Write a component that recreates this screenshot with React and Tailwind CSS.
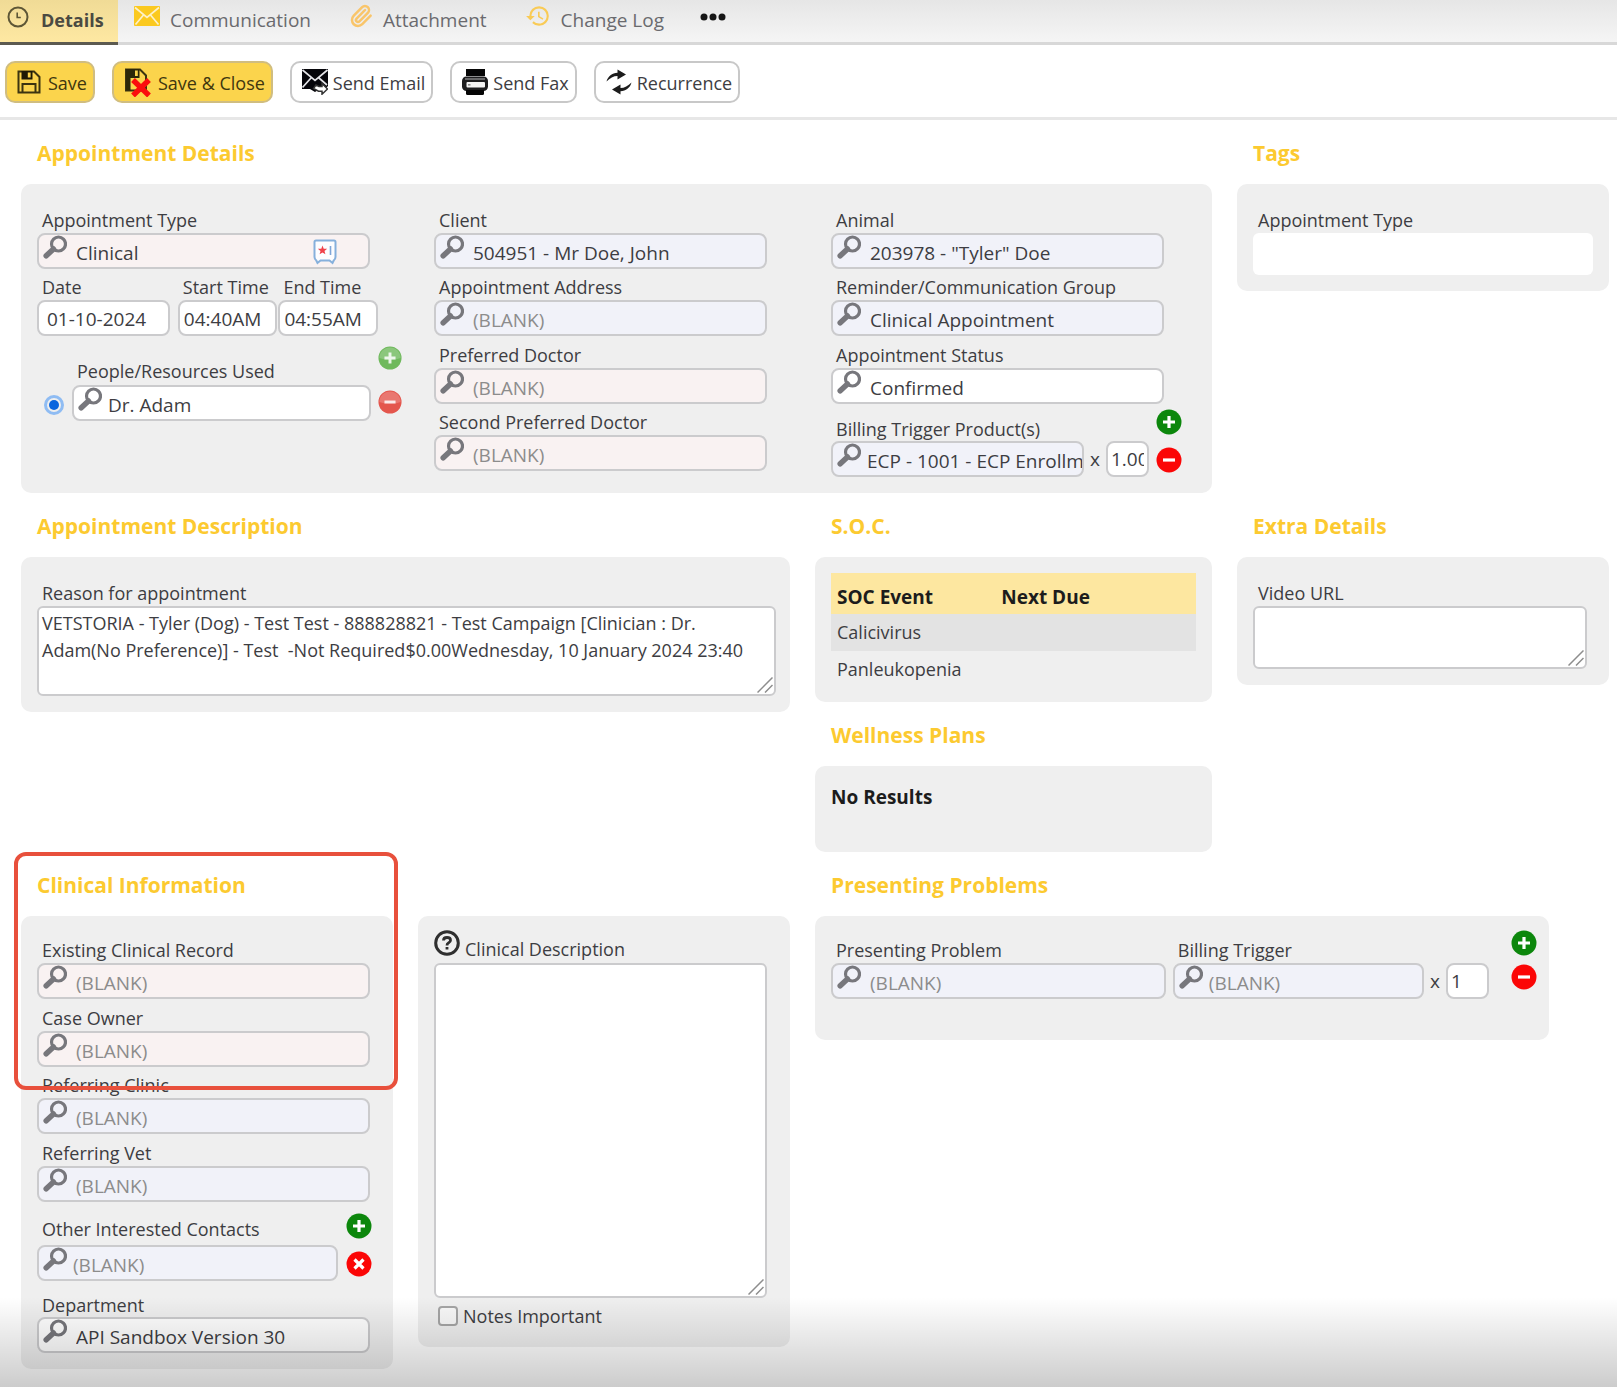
import { useId } from 'react';
import { MdHistory } from 'react-icons/md';
import { Paperclip } from 'lucide-react';

const TONES = {
  pink: 'bg-[#f9f2f2]',
  blue: 'bg-[#f1f2f9]',
  white: 'bg-white',
};

/* ---------- Icons ---------- */

const MagnifierIcon = () => (
  <svg viewBox="0 0 24 24" className="h-6 w-6 shrink-0" fill="none" stroke="#77777c">
    <circle cx="15.5" cy="9" r="7" strokeWidth="3.2" />
    <path d="M10.5 14 3.2 20.8" strokeWidth="5.5" strokeLinecap="round" />
  </svg>
);

const ClockIcon = () => (
  <svg viewBox="0 0 22 22" className="h-[22px] w-[22px]" fill="none" stroke="#5d5636">
    <circle cx="11" cy="11" r="9.5" strokeWidth="2" />
    <path d="M10.2 6.5v5h3.6" strokeWidth="1.6" />
  </svg>
);

const MailIcon = () => (
  <svg viewBox="0 0 26 20" className="h-5 w-[26px]">
    <rect width="26" height="20" rx="1" fill="#fbc91f" />
    <path d="M1 1.5 13 11.5 25 1.5M1.5 18.5 9.5 9M24.5 18.5 16.5 9" fill="none" stroke="#fdf1c8" strokeWidth="1.7" />
  </svg>
);

const FloppyIcon = () => (
  <svg viewBox="0 0 24 24" className="h-6 w-6">
    <path d="M1.5 1.5h15.5l5.5 5.5v15.5h-21z" fill="none" stroke="#3c3410" strokeWidth="2" />
    <path d="M4.5 1h11v8.5h-11z" fill="#1d1905" />
    <path d="M10.8 2.5h2.8v5h-2.8z" fill="#fbd44c" />
    <path d="M5.5 22.5v-8.5h13v8.5" fill="none" stroke="#3c3410" strokeWidth="2" />
  </svg>
);

const FloppyCloseIcon = () => (
  <svg viewBox="0 0 27 30" className="h-[30px] w-[27px]">
    <path d="M2 2.5h14l6 6v15h-20z" fill="none" stroke="#3c3410" strokeWidth="2" />
    <path d="M2 2h13.5v9h-9v12.5h-4.500z" fill="#2c2708" />
    <path d="M11 3.5h2.8v5.5h-2.8z" fill="#fbd44c" />
    <path d="M9 13 25 28.5M25 13 9 28.5" stroke="#fb0d0d" strokeWidth="5.4" />
  </svg>
);

const SendMailIcon = () => (
  <svg viewBox="0 0 26 26" className="h-[26px] w-[26px]">
    <path d="M0 0h26v17l-4 4h-6l-3 2-5-3H0z" fill="#05050a" />
    <path d="M.5 1 13 11.500 25.500 1M.5 18.500 9 9M25 16 17 9" fill="none" stroke="#e4e4e8" strokeWidth="1.7" />
    <path d="M11.5 19.5 14 16l3 1.5h3v-3l5.5 5.500-5.500 5.200v-3h-3.500z" fill="#fff" stroke="#333" strokeWidth="1.5" />
  </svg>
);

const FaxIcon = () => (
  <svg viewBox="0 0 26 26" className="h-[26px] w-[26px]">
    <path d="M4 0h19v7h-19z" fill="#050505" />
    <rect y="7.5" width="26" height="14.5" rx="4.5" fill="#1d1d1f" />
    <path d="M3 10h20" stroke="#8a8a8a" strokeWidth="1.4" />
    <rect x="4.5" y="13" width="18.5" height="5.5" rx="1" fill="#f4f4f4" />
    <path d="M4 21h18v3.5q0 1.5-1.5 1.5h-15q-1.5 0-1.5-1.5z" fill="#050505" />
    <path d="M6 15.8h2.5" stroke="#888" strokeWidth="1.5" />
  </svg>
);

const RecurrenceIcon = () => (
  <svg viewBox="0 0 26 26" className="h-[26px] w-[26px]" fill="#1c1c1c">
    <path d="M.5 12.500C2 7 6 4 11.500 3.700V.500L20 5.500l-8.500 5V7C7.500 7 4 9 .5 12.500z" />
    <path d="M25.500 13.500c-1.500 5.500-5.500 8.500-11 8.800v3.200L6 20.500l8.500-5V19c4 0 7.500-2 11-5.500z" />
  </svg>
);

const BadgeIcon = () => (
  <svg viewBox="0 0 24 26" className="mt-1 mr-[31px] h-[26px] w-6 shrink-0">
    <path d="M3 1.500h18q1.500 0 1.500 1.500v15q0 2-1.800 3.500l-1.200 2.500-3-2.500h-9l-3 2.500-1.200-2.500Q1.500 20 1.500 18V3q0-1.500 1.500-1.500z" fill="#fdfdff" stroke="#86b0dc" strokeWidth="2" />
    <path d="m9.500 6.500 1.200 3.200 3.500.1-2.700 2.100.9 3.400-2.900-1.900-2.900 1.900.9-3.400-2.700-2.100 3.500-.1z" fill="#f0434b" />
    <path d="M17.500 7v9" stroke="#7fa6d8" strokeWidth="1.6" />
  </svg>
);

const HelpIcon = () => (
  <svg viewBox="0 0 26 26" className="h-[26px] w-[26px]" fill="none" stroke="#2f2f2f">
    <circle cx="13" cy="13" r="11.3" strokeWidth="3" />
    <path d="M9.500 10.500Q9.500 7.500 13 7.500t3.500 2.700q0 1.600-1.800 2.500T13 15.500" strokeWidth="2.8" />
    <path d="M13 17v2.500" strokeWidth="2.8" />
  </svg>
);

const MARKS = {
  plus: 'M13 7v12M7 13h12',
  minus: 'M7 13h12',
  cross: 'M8.5 8.5l9 9M17.5 8.5l-9 9',
};

const RoundButton = ({ mark, fill, label, soft }) => (
  <button type="button" aria-label={label} className="shrink-0">
    <svg viewBox="0 0 26 26" className={soft ? 'h-6 w-6' : 'h-[26px] w-[26px]'}>
      <circle cx="13" cy="13" r="12.5" fill={fill} />
      {soft && <path d="M1.500 13a11.500 11.500 0 0 1 23 0q-11 4-23 0z" fill="#fff" opacity=".2" />}
      <path d={MARKS[mark]} stroke="#fff" strokeWidth="3.2" opacity={soft ? 0.85 : 1} />
    </svg>
  </button>
);

/* ---------- Form parts ---------- */

const Label = ({ htmlFor, className = 'pt-1.5 pb-px', children }) => (
  <label htmlFor={htmlFor} className={`block pl-[5px] text-[18px] leading-6 whitespace-nowrap ${className}`}>
    {children}
  </label>
);

const Lookup = ({ id, value, tone = 'blue', badge, tight }) => (
  <div className={`flex h-9 items-start overflow-hidden rounded-lg border-2 border-[#cbcbcd] pl-1 ${TONES[tone]}`}>
    <MagnifierIcon />
    <input
      id={id}
      defaultValue={value}
      placeholder="(BLANK)"
      className={`h-8 w-full min-w-0 flex-1 pt-[3px] outline-none placeholder:text-[#8c8c8c] ${tight ? 'pl-1.5' : 'pl-[9px]'}`}
    />
    {badge && <BadgeIcon />}
  </div>
);

const Field = ({ label, labelClass, ...rest }) => {
  const id = useId();
  return (
    <div>
      <Label htmlFor={id} className={labelClass}>{label}</Label>
      <Lookup id={id} {...rest} />
    </div>
  );
};

const PlainField = ({ label, value, className, inputClass = 'pl-1' }) => {
  const id = useId();
  return (
    <div className={className}>
      <Label htmlFor={id}>{label}</Label>
      <input
        id={id}
        defaultValue={value}
        className={`h-9 w-full rounded-lg border-2 border-[#cbcbcd] bg-white pt-px outline-none ${inputClass}`}
      />
    </div>
  );
};

const Quantity = ({ value, label }) => (
  <div className="flex shrink-0 items-center">
    <span className="w-[22px] text-center">x</span>
    <input
      aria-label={label}
      defaultValue={value}
      className="h-9 w-[43px] rounded-lg border-2 border-[#cbcbcd] bg-white px-[3px] outline-none"
    />
  </div>
);

const TextBox = ({ id, value, className }) => (
  <div className="relative">
    <textarea
      id={id}
      defaultValue={value}
      className={`block w-full resize-none rounded-md border-2 border-[#cbcbcd] bg-white px-[3px] py-0.5 text-[18px] leading-[27px] outline-none ${className}`}
    />
    <svg viewBox="0 0 16 16" className="absolute right-[3px] bottom-[3px] h-4 w-4" stroke="#8d8d8d" strokeWidth="1.5">
      <path d="M.5 15.5l15-15M8 15.5l7.5-7.5" />
    </svg>
  </div>
);

const Section = ({ title, className = '', panelClass = '', children }) => (
  <section className={className}>
    <h2 className="h-16 pt-[19px] pl-4 text-[21px] leading-7 font-bold text-[#fcca30]">{title}</h2>
    <div className={`rounded-[10px] bg-[#efefef] px-4 ${panelClass}`}>{children}</div>
  </section>
);

/* ---------- Header ---------- */

const TABS = [
  { label: 'Communication', icon: <MailIcon />, pad: 'pl-4' },
  { label: 'Attachment', icon: <Paperclip className="h-6 w-6" stroke="#f9c56a" strokeWidth={2.5} />, pad: 'pl-[38px]' },
  { label: 'Change Log', icon: <MdHistory className="h-[26px] w-[26px]" color="#f9cb56" />, pad: 'pl-[38px]' },
];

const Tabs = () => (
  <nav className="flex h-[45px] border-b-[3px] border-[#d8d8d8] bg-linear-to-b from-[#e6e6e6] to-[#f5f5f5] text-[#6a6a6e]">
    <a href="#details" className="-mb-[3px] flex w-[118px] border-b-[3px] border-[#5c5a50] bg-linear-to-b from-[#f0db96] to-[#fee8a2] pt-1.5 pl-[7px] text-[18px] font-bold text-[#4b4a42]">
      <ClockIcon />
      <span className="pl-3 leading-7">Details</span>
    </a>
    {TABS.map((tab) => (
      <a key={tab.label} href="#tab" className={`flex items-start pt-1.5 ${tab.pad}`}>
        <span className="flex h-5 items-center">{tab.icon}</span>
        <span className="pl-2.5 leading-7">{tab.label}</span>
      </a>
    ))}
    <button type="button" aria-label="More" className="flex h-[34px] items-center pl-9">
      <svg viewBox="0 0 26 8" className="h-2 w-[26px]" fill="#161616">
        <circle cx="4" cy="4" r="3.5" />
        <circle cx="13" cy="4" r="3.5" />
        <circle cx="22" cy="4" r="3.5" />
      </svg>
    </button>
  </nav>
);

const ToolButton = ({ icon, primary, gap = 'gap-[5px]', children }) => (
  <button
    type="button"
    className={`flex h-[42px] items-center rounded-[10px] border-2 pr-1.5 pl-2.5 text-[18px] whitespace-nowrap ${gap} ${
      primary ? 'border-[#d0bd80] bg-[#fbd44c] text-[#40370f]' : 'border-[#c8c8c8] bg-white'
    }`}
  >
    {icon}
    <span className="pt-0.5">{children}</span>
  </button>
);

const Toolbar = () => (
  <div className="flex h-[75px] items-center gap-[17px] border-b-[3px] border-[#e7e7e7] px-[5px] pt-0.5">
    <ToolButton primary gap="gap-[7px]" icon={<FloppyIcon />}>Save</ToolButton>
    <ToolButton primary gap="gap-[7px]" icon={<FloppyCloseIcon />}>Save &amp; Close</ToolButton>
    <ToolButton icon={<SendMailIcon />}>Send Email</ToolButton>
    <ToolButton icon={<FaxIcon />}>Send Fax</ToolButton>
    <ToolButton icon={<RecurrenceIcon />}>Recurrence</ToolButton>
  </div>
);

/* ---------- Sections ---------- */

const AppointmentDetails = () => (
  <Section title="Appointment Details" className="col-span-3" panelClass="grid grid-cols-3 gap-16 pt-[18px] pr-12 pb-4">
    <div>
      <Field label="Appointment Type" value="Clinical" tone="pink" badge />
      <div className="-mr-2 flex">
        <PlainField label="Date" value="01-10-2024" className="flex-4" inputClass="pl-2" />
        <PlainField label="Start Time" value="04:40AM" className="ml-2 flex-3" />
        <PlainField label="End Time" value="04:55AM" className="ml-px flex-3" />
      </div>
      <div className="-mr-8 flex pt-2.5">
        <div className="flex w-[35px] shrink-0 items-end pb-1.5 pl-[7px]">
          <input
            type="radio"
            name="resource"
            defaultChecked
            aria-label="Dr. Adam"
            className="h-5 w-5 appearance-none rounded-full border-[3px] border-[#8fbcf3] bg-[#0b66de] bg-clip-content p-[2px]"
          />
        </div>
        <div className="flex-1">
          <Field label="People/Resources Used" labelClass="pt-[13px] pb-0.5" value="Dr. Adam" tone="white" tight />
        </div>
        <div className="flex flex-col gap-5 pl-[7px]">
          <RoundButton mark="plus" fill="#6fb95c" label="Add resource" soft />
          <RoundButton mark="minus" fill="#e4564d" label="Remove resource" soft />
        </div>
      </div>
    </div>
    <div>
      <Field label="Client" value="504951 - Mr Doe, John" />
      <Field label="Appointment Address" />
      <Field label="Preferred Doctor" labelClass="pt-[7px] pb-px" tone="pink" />
      <Field label="Second Preferred Doctor" tone="pink" />
    </div>
    <div>
      <Field label="Animal" value={'203978 - "Tyler" Doe'} />
      <Field label="Reminder/Communication Group" value="Clinical Appointment" />
      <Field label="Appointment Status" labelClass="pt-[7px] pb-px" value="Confirmed" tone="white" />
      <div className="-mr-[18px] flex items-end">
        <div className="min-w-0 flex-1">
          <Field label="Billing Trigger Product(s)" labelClass="pt-[13px]" value="ECP - 1001 - ECP Enrollment" tight />
        </div>
        <Quantity value="1.00" label="Billing quantity" />
        <div className="flex flex-col gap-3 pb-1 pl-[7px]">
          <RoundButton mark="plus" fill="#0c870c" label="Add product" />
          <RoundButton mark="minus" fill="#fb0606" label="Remove product" />
        </div>
      </div>
    </div>
  </Section>
);

const SocTable = () => (
  <table className="w-full text-left">
    <thead>
      <tr className="h-[41px] bg-[#fde7a0] text-[#1c1c1c]">
        <th className="w-[45%] pt-2 pl-1.5 font-bold">SOC Event</th>
        <th className="pt-2 pl-1.5 font-bold">Next Due</th>
      </tr>
    </thead>
    <tbody className="text-[18px]">
      {['Calicivirus', 'Panleukopenia'].map((name) => (
        <tr key={name} className="h-[37px] odd:bg-[#e3e3e3]">
          <td className="pl-1.5">{name}</td>
          <td />
        </tr>
      ))}
    </tbody>
  </table>
);

const ClinicalInformation = () => (
  <Section title="Clinical Information" className="relative" panelClass="pt-4 pr-[23px] pb-4">
    <Field label="Existing Clinical Record" tone="pink" />
    <Field label="Case Owner" labelClass="pt-[7px] pb-px" tone="pink" />
    <Field label="Referring Clinic" />
    <Field label="Referring Vet" labelClass="pt-[7px] pb-px" />
    <div className="-mr-0.5 flex items-end pt-[7px]">
      <div className="flex-1">
        <Field label="Other Interested Contacts" labelClass="pt-2 pb-1" tight />
      </div>
      <div className="flex flex-col gap-3 pb-1 pl-2">
        <RoundButton mark="plus" fill="#0c870c" label="Add contact" />
        <RoundButton mark="cross" fill="#fb0606" label="Remove contact" />
      </div>
    </div>
    <Field label="Department" labelClass="pt-3" value="API Sandbox Version 30" tone="white" />
    {/* highlight around the record and owner fields */}
    <div className="pointer-events-none absolute top-0 -right-[5px] -left-[7px] h-[238px] rounded-xl border-4 border-[#e8503c]" />
  </Section>
);

const ClinicalDescription = () => (
  <section className="mt-16 self-start rounded-[10px] bg-[#efefef] pt-3.5 pr-[23px] pb-[19px] pl-4">
    <div className="flex h-[33px] items-start">
      <HelpIcon />
      <Label htmlFor="clinical-description" className="pt-[7px]">Clinical Description</Label>
    </div>
    <TextBox id="clinical-description" className="h-[335px]" />
    <div className="flex items-center pt-1.5 pl-1">
      <input
        id="notes-important"
        type="checkbox"
        className="h-5 w-5 appearance-none rounded border-2 border-[#a5a5a5] bg-[#f8f8f8]"
      />
      <Label htmlFor="notes-important" className="">Notes Important</Label>
    </div>
  </section>
);

const PresentingProblems = () => (
  <Section title="Presenting Problems" className="col-span-2 mr-[60px]" panelClass="flex pt-4 pb-[41px]">
    <div className="flex-4">
      <Field label="Presenting Problem" />
    </div>
    <div className="ml-[7px] flex-3">
      <Field label="Billing Trigger" tight />
    </div>
    <div className="flex items-end">
      <Quantity value="1" label="Problem quantity" />
    </div>
    <div className="-mt-0.5 -mr-1 flex flex-col gap-2 pl-[22px]">
      <RoundButton mark="plus" fill="#0c870c" label="Add problem" />
      <RoundButton mark="minus" fill="#fb0606" label="Remove problem" />
    </div>
  </Section>
);

export default function App() {
  return (
    <div className="relative min-h-screen bg-white pb-[18px] font-['Open_Sans','Noto_Sans',sans-serif] text-[19px] text-[#3d3d42]">
      <Tabs />
      <Toolbar />
      <main className="grid grid-cols-[372fr_372fr_397fr_372fr] gap-x-[25px] pr-2 pl-[21px]">
        <AppointmentDetails />
        <Section title="Tags" panelClass="pt-[18px] pb-4">
          <Label htmlFor="tag-type">Appointment Type</Label>
          <input id="tag-type" className="block h-[42px] w-full rounded-md bg-white px-2 outline-none" />
        </Section>

        <Section title="Appointment Description" className="col-span-2" panelClass="pt-[18px] pr-3.5 pb-4">
          <Label htmlFor="reason">Reason for appointment</Label>
          <TextBox
            id="reason"
            className="h-[90px]"
            value="VETSTORIA - Tyler (Dog) - Test Test - 888828821 - Test Campaign [Clinician : Dr. Adam(No Preference)] - Test  -Not Required$0.00Wednesday, 10 January 2024 23:40"
          />
        </Section>
        <div>
          <Section title="S.O.C." panelClass="pt-4 pb-3.5">
            <SocTable />
          </Section>
          <Section title="Wellness Plans" panelClass="h-[86px] pt-[19px]">
            <p className="leading-6 font-bold text-[#1c1c1c]">No Results</p>
          </Section>
        </div>
        <Section title="Extra Details" panelClass="pt-[18px] pr-[22px] pb-4">
          <Label htmlFor="video-url">Video URL</Label>
          <TextBox id="video-url" className="h-[63px]" />
        </Section>

        <ClinicalInformation />
        <ClinicalDescription />
        <PresentingProblems />
      </main>
      <div className="pointer-events-none absolute inset-x-0 bottom-0 h-[90px] bg-linear-to-t from-black/20 to-transparent" />
    </div>
  );
}
